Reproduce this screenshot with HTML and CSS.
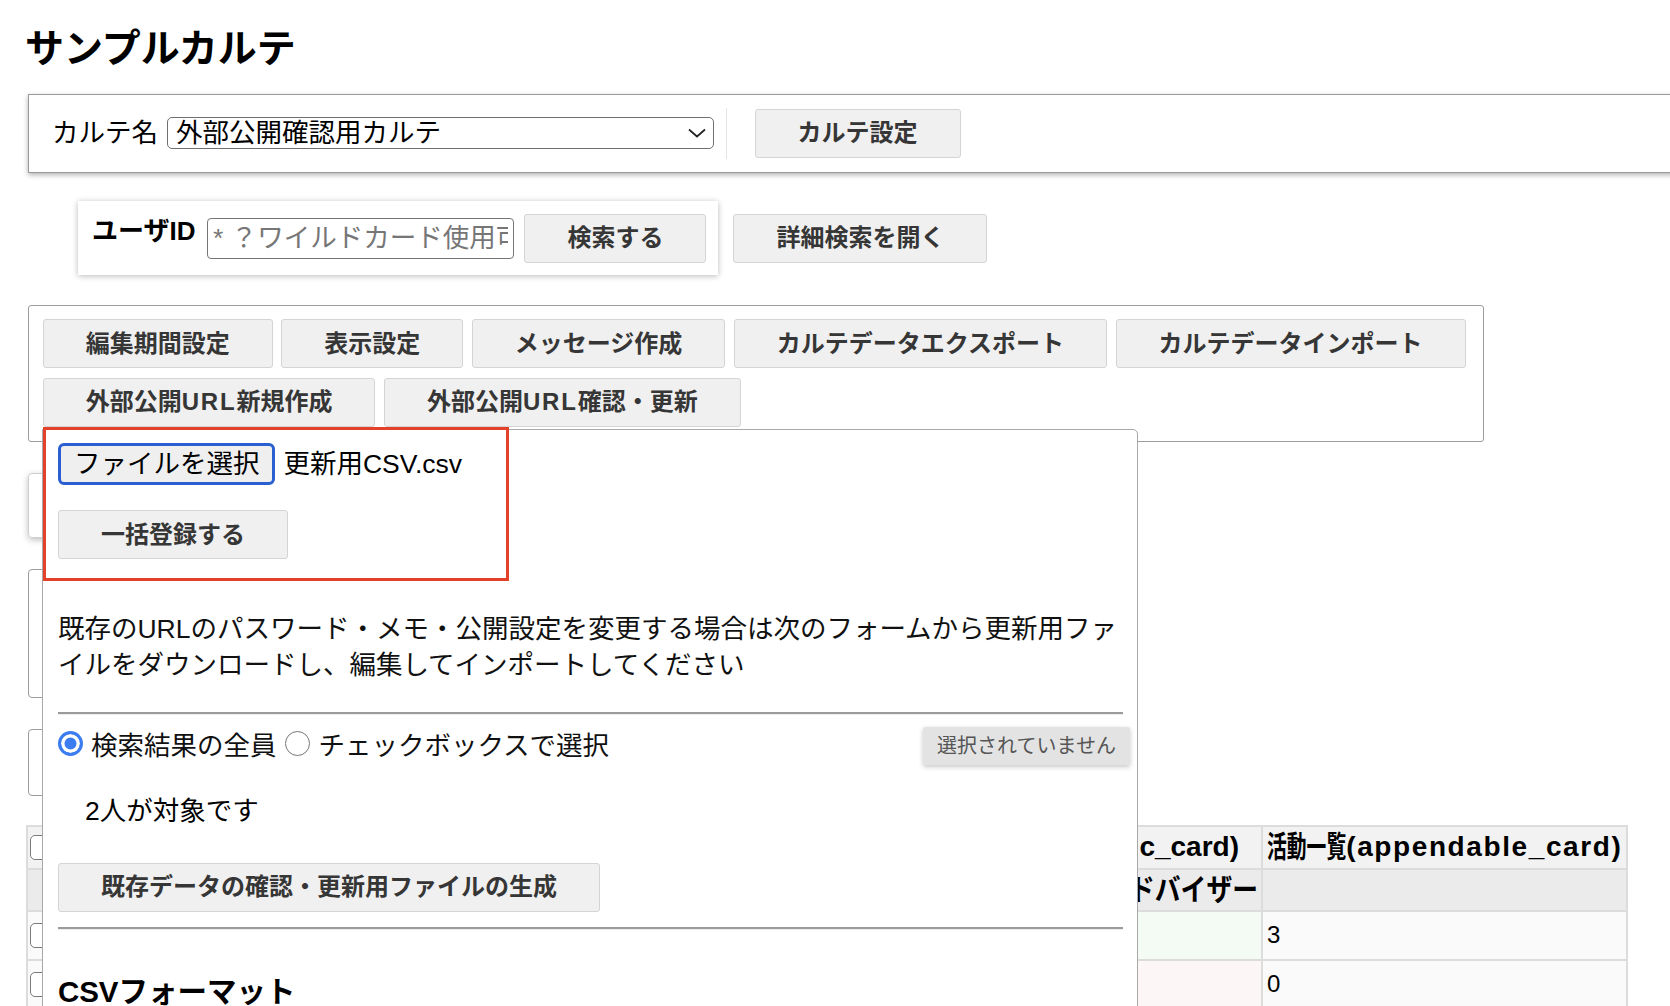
FILE: index.html
```html
<!DOCTYPE html>
<html lang="ja">
<head>
<meta charset="utf-8">
<title>サンプルカルテ</title>
<link rel="stylesheet" href="styles.css">
</head>
<body>
<div class="page">
  <h1 class="title">サンプルカルテ</h1>

  <div class="karte-bar">
    <span class="karte-label">カルテ名</span>
    <div class="select">
      <span>外部公開確認用カルテ</span>
      <svg class="chev" width="18" height="10" viewBox="0 0 18 10"><polyline points="1,1.5 9,8.5 17,1.5" fill="none" stroke="#222" stroke-width="1.7"/></svg>
    </div>
    <span class="vsep"></span>
    <button class="btn">カルテ設定</button>
  </div>

  <div class="search-row">
    <div class="search-box">
      <span class="search-label">ユーザID</span>
      <input class="search-input" type="text" placeholder="* ？ワイルドカード使用可能">
      <button class="btn btn-search">検索する</button>
    </div>
    <button class="btn">詳細検索を開く</button>
  </div>

  <div class="toolbar">
    <div class="tool-row">
      <button class="btn">編集期間設定</button>
      <button class="btn">表示設定</button>
      <button class="btn">メッセージ作成</button>
      <button class="btn">カルテデータエクスポート</button>
      <button class="btn">カルテデータインポート</button>
    </div>
    <div class="tool-row">
      <button class="btn">外部公開<span class="latin">URL</span>新規作成</button>
      <button class="btn">外部公開<span class="latin">URL</span>確認・更新</button>
    </div>

    <div class="popup">
      <div class="annot"></div>
      <div class="file-row">
        <span class="file-btn">ファイルを選択</span>
        <span class="file-name">更新用CSV.csv</span>
      </div>
      <button class="btn btn-block btn-register">一括登録する</button>
      <p class="note">既存のURLのパスワード・メモ・公開設定を変更する場合は次のフォームから更新用ファイルをダウンロードし、編集してインポートしてください</p>
      <hr class="rule rule-1">
      <div class="choice-row">
        <span class="radio on"></span><span class="choice-text">検索結果の全員</span>
        <span class="radio off"></span><span class="choice-text">チェックボックスで選択</span>
        <span class="tag">選択されていません</span>
      </div>
      <p class="count">2人が対象です</p>
      <button class="btn btn-block btn-generate">既存データの確認・更新用ファイルの生成</button>
      <hr class="rule rule-2">
      <h3 class="csv-title">CSVフォーマット</h3>
    </div>
  </div>

  <div class="panel panel-a"></div>
  <div class="panel panel-b"></div>
  <div class="panel panel-c"></div>

  <table class="grid">
    <colgroup>
      <col class="c-check"><col class="c-name"><col class="c-basic"><col class="c-last">
    </colgroup>
    <tr class="r-head1">
      <td class="cell-check"><span class="checkbox"></span></td>
      <td></td>
      <td class="basic-head">担当者(basic_card)</td>
      <td class="last-head"><span class="cond cond-head">活動一覧</span><span class="latin-head">(appendable_card)</span></td>
    </tr>
    <tr class="r-head2">
      <td class="cell-check"></td>
      <td></td>
      <td class="basic-sub"><span class="cond cond-sub">担当アドバイザー</span></td>
      <td></td>
    </tr>
    <tr class="r-body r-1">
      <td class="cell-check"><span class="checkbox"></span></td>
      <td></td>
      <td class="tint-green"></td>
      <td class="num">3</td>
    </tr>
    <tr class="r-body r-2">
      <td class="cell-check"><span class="checkbox"></span></td>
      <td></td>
      <td class="tint-pink"></td>
      <td class="num">0</td>
    </tr>
  </table>
</div>
</body>
</html>
```

FILE: styles.css
```css
html, body {
  margin: 0;
  padding: 0;
  overflow: hidden;
  background: #fff;
}

body {
  font-family: "Liberation Sans", "Noto Sans CJK JP", sans-serif;
  font-size: 26.5px;
  line-height: 36px;
  color: #000;
}

.page {
  padding: 26px 0 0 28px;
}

.title {
  margin: 0 0 22px -3px;
  font-size: 39px;
  line-height: 46px;
  font-weight: 700;
}

/* generic button */
.btn {
  height: 49px;
  padding: 0 42px;
  border: 1px solid #d4d4d4;
  border-radius: 3px;
  background: #f0f0f0;
  color: #363636;
  font-family: "Liberation Sans", "Noto Sans CJK JP", sans-serif;
  font-size: 24px;
  font-weight: 700;
  line-height: 1;
  white-space: nowrap;
  flex: none;
}

.btn .latin {
  letter-spacing: 1.8px;
}

.btn-block {
  display: block;
}

/* karte selector bar */
.karte-bar {
  display: flex;
  align-items: center;
  height: 78.5px;
  box-sizing: border-box;
  margin-right: -40px;
  padding-left: 23px;
  border: 1px solid #9a9a9a;
  box-shadow: 0 2px 5px rgba(0, 0, 0, 0.3);
}

.karte-label {
  flex: none;
}

.select {
  display: flex;
  align-items: center;
  justify-content: space-between;
  width: 546.5px;
  height: 32.3px;
  box-sizing: border-box;
  margin-left: 9px;
  padding: 0 7px 0 8px;
  border: 1px solid #6f6f6f;
  border-radius: 5px;
  flex: none;
}

.chev {
  flex: none;
}

.vsep {
  width: 1px;
  height: 51px;
  background: #e4e4e4;
  margin: 0 28px 0 12px;
  flex: none;
}

/* search row */
.search-row {
  display: flex;
  align-items: center;
  gap: 15px;
  margin: 28.5px 0 0 49.5px;
}

.search-box {
  display: flex;
  align-items: center;
  height: 74px;
  box-sizing: border-box;
  padding: 0 12px 0 14.5px;
  background: #fff;
  box-shadow: 0 1px 6px rgba(0, 0, 0, 0.28);
}

.search-label {
  align-self: flex-start;
  margin-top: 11.5px;
  font-weight: 700;
  font-size: 26px;
  flex: none;
}

.search-input {
  width: 307.5px;
  height: 41px;
  box-sizing: border-box;
  margin-left: 11.5px;
  padding: 0 5px;
  border: 1px solid #767676;
  border-radius: 4px;
  font-family: "Liberation Sans", "Noto Sans CJK JP", sans-serif;
  font-size: 26.5px;
  color: #000;
  flex: none;
}

.search-input::placeholder {
  color: #767676;
}

.btn-search {
  margin-left: 10px;
}

/* toolbar card */
.toolbar {
  position: relative;
  display: flex;
  flex-direction: column;
  gap: 9.4px;
  width: 1456.3px;
  box-sizing: border-box;
  margin-top: 30px;
  padding: 13.3px 13.7px 14.3px;
  border: 1px solid #9c9c9c;
  border-radius: 3px;
}

.tool-row {
  display: flex;
  gap: 8.5px;
}

/* dropdown panel */
.popup {
  position: absolute;
  left: 13.4px;
  top: 123.3px;
  z-index: 5;
  width: 1096px;
  height: 700px;
  box-sizing: border-box;
  padding: 12.7px 14.5px 0;
  background: #fff;
  border: 1px solid #a9a9a9;
  border-radius: 0 5px 0 0;
}

.annot {
  position: absolute;
  left: 0;
  top: -3px;
  width: 465.4px;
  height: 153.4px;
  box-sizing: border-box;
  border: 3.5px solid #e4412b;
  pointer-events: none;
}

.file-row {
  display: flex;
  align-items: center;
  height: 42px;
}

.file-btn {
  display: flex;
  align-items: center;
  height: 42px;
  box-sizing: border-box;
  padding: 0 13px;
  border: 3px solid #2a5fcf;
  border-radius: 6px;
  background: #efefef;
}

.file-name {
  margin-left: 8px;
}

.btn-register {
  margin-top: 25.5px;
}

.note {
  margin: 51.5px 0 0;
  color: #111;
}

.rule {
  height: 0;
  margin: 0;
  border: 0;
  border-top: 2px solid #9b9b9b;
  border-bottom: 1px solid #ececec;
}

.rule-1 {
  margin-top: 29px;
}

.choice-row {
  display: flex;
  align-items: center;
  height: 46px;
  margin-top: 8px;
}

.radio {
  width: 25px;
  height: 25px;
  box-sizing: border-box;
  border-radius: 50%;
  margin: 0 8px 5px 0;
  flex: none;
}

.radio.on {
  border: 3px solid #3b7cf1;
  background: #3b7cf1;
  box-shadow: inset 0 0 0 3.5px #fff;
}

.radio.off {
  border: 1.5px solid #777;
  background: #fff;
  margin-left: 9px;
}

.choice-text {
  color: #111;
}

.tag {
  display: flex;
  align-items: center;
  height: 38px;
  margin-left: auto;
  margin-right: -7px;
  padding: 0 14px;
  background: #e3e3e3;
  color: #555;
  font-size: 20px;
  border-radius: 2px;
  box-shadow: 0 2px 5px rgba(0, 0, 0, 0.22);
}

.count {
  margin: 24px 0 0 27px;
}

.btn-generate {
  margin-top: 33.7px;
}

.rule-2 {
  margin-top: 15px;
}

.csv-title {
  margin: 44px 0 0;
  font-size: 29.5px;
  line-height: 36px;
  font-weight: 700;
}

/* background panels (under the dropdown) */
.panel {
  width: 900px;
  box-sizing: border-box;
  border: 1px solid #9c9c9c;
  border-radius: 4px;
  margin-top: 31px;
}

.panel-a {
  height: 65px;
  border-color: #cfcfcf;
  box-shadow: 0 2px 6px rgba(0, 0, 0, 0.25);
}

.panel-b {
  height: 129px;
}

.panel-c {
  height: 67.5px;
}

/* table */
.grid {
  margin: 28.5px 0 0 -2px;
  width: 1600px;
  table-layout: fixed;
  border-collapse: collapse;
  font-size: 24px;
  line-height: 26px;
}

.c-check { width: 40px; }
.c-name { width: 560px; }
.c-basic { width: 635px; }
.c-last { width: 365px; }

.grid td {
  border: 2px solid #dcdcdc;
  padding: 0 4px;
  vertical-align: middle;
  white-space: nowrap;
  overflow: hidden;
}

.r-head1 { height: 42.7px; background: #f2f2f2; font-weight: 700; }
.r-head2 { height: 42.5px; background: #ebebeb; font-weight: 700; }
.r-body { height: 48.6px; background: #fafafa; }

.grid td.cell-check {
  padding: 0 0 0 2px;
}

.checkbox {
  display: block;
  width: 25px;
  height: 25px;
  box-sizing: border-box;
  border: 1.5px solid #7a7a7a;
  border-radius: 5px;
  background: #fff;
}

.basic-head {
  text-align: right;
  font-size: 28px;
}

.grid td.basic-head {
  padding-right: 22px;
}

.grid td.basic-sub {
  text-align: right;
  padding-right: 3px;
}

.cond {
  display: inline-block;
  font-size: 30px;
  line-height: 30px;
  font-weight: 700;
  vertical-align: middle;
}

.cond-head {
  transform: scaleX(0.66);
  transform-origin: left center;
  margin-right: -40.8px;
}

.cond-sub {
  transform: scaleX(0.86);
  transform-origin: right center;
  margin-left: -33.6px;
}

.latin-head {
  font-size: 28px;
  letter-spacing: 1.6px;
  vertical-align: middle;
}

.tint-green { background: #f4fbf4; }
.tint-pink { background: #fcf7f6; }

.num {
  font-size: 24px;
}
```
